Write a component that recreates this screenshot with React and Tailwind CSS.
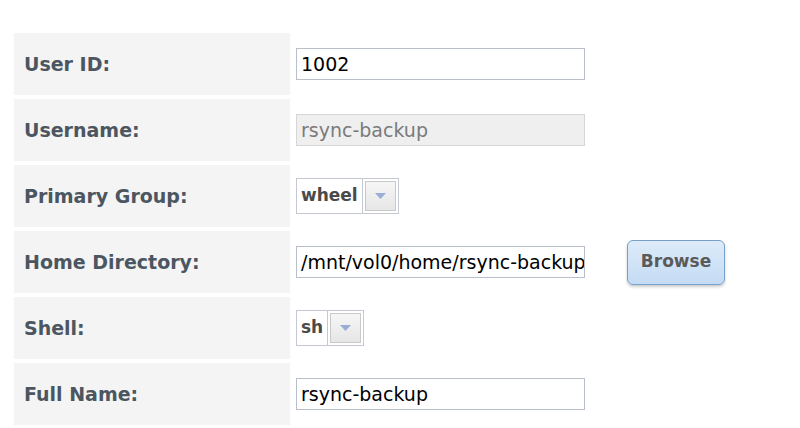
import React from 'react';

const font = { fontFamily: '"DejaVu Sans", Verdana, sans-serif' };

const TextBox = ({ value, disabled }) => (
  <div
    className={`w-[289px] h-[32px] border flex items-center pl-[4px] overflow-hidden whitespace-nowrap text-[19px] ${
      disabled
        ? 'bg-[#efefef] border-[#d6d6d6] text-[#7a7a7a]'
        : 'bg-white border-[#b9bfca] text-black'
    }`}
  >
    {value}
  </div>
);

const Select = ({ value }) => (
  <div className="h-[36px] flex border border-[#c3c8d3] bg-white">
    <div className="flex items-center px-[4px] text-[17px] font-bold text-[#4a4a4a] border-r border-[#c3c8d3]">
      {value}
    </div>
    <div className="p-[2px] flex">
      <div className="w-[31px] border border-[#c9c9c9] bg-gradient-to-b from-[#f6f6f6] to-[#e6e6e6] flex items-center justify-center">
        <svg width="11" height="6" viewBox="0 0 11 6">
          <path d="M0 0h11L5.5 6z" fill="#98aed6" />
        </svg>
      </div>
    </div>
  </div>
);

const Row = ({ label, children }) => (
  <div className="flex h-[62px]">
    <div className="w-[276px] bg-[#f4f4f4] flex items-center pl-[10px] text-[19px] font-bold text-[#4b5661]">
      {label}
    </div>
    <div className="flex items-center pl-[6px]">{children}</div>
  </div>
);

export default function App() {
  return (
    <div className="w-[800px] h-[428px] bg-white overflow-hidden pt-[33px] pl-[14px]" style={font}>
      <div className="flex flex-col gap-[4px]">
        <Row label="User ID:">
          <TextBox value="1002" />
        </Row>
        <Row label="Username:">
          <TextBox value="rsync-backup" disabled />
        </Row>
        <Row label="Primary Group:">
          <Select value="wheel" />
        </Row>
        <Row label="Home Directory:">
          <TextBox value="/mnt/vol0/home/rsync-backup" />
          <button className="ml-[42px] w-[98px] h-[45px] rounded-[6px] border border-[#77a0cc] bg-gradient-to-b from-[#deebf9] to-[#c3dbf4] text-[17px] font-bold text-[#5a5a5a] shadow-[0_2px_3px_rgba(0,0,0,0.2)]">
            Browse
          </button>
        </Row>
        <Row label="Shell:">
          <Select value="sh" />
        </Row>
        <Row label="Full Name:">
          <TextBox value="rsync-backup" />
        </Row>
      </div>
    </div>
  );
}
